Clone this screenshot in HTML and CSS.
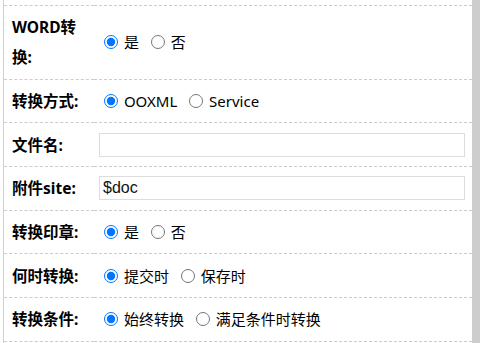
FILE: index.html
```html
<!DOCTYPE html>
<html lang="en">
<head>
    <meta charset="UTF-8">
    <meta name="viewport" content="width=device-width, initial-scale=1.0">
    <title>WORD转换设置</title>
    <link rel="stylesheet" href="styles.css">
</head>
<body>
    <div class="page">
        <div class="panel">
            <table class="form-table">
                <tr>
                    <td class="label">WORD转换:</td>
                    <td class="value">
                        <label><input type="radio" name="word" checked> 是</label>
                        <label><input type="radio" name="word"> 否</label>
                    </td>
                </tr>
                <tr>
                    <td class="label">转换方式:</td>
                    <td class="value">
                        <label><input type="radio" name="mode" checked> OOXML</label>
                        <label><input type="radio" name="mode"> Service</label>
                    </td>
                </tr>
                <tr>
                    <td class="label">文件名:</td>
                    <td class="value"><input type="text" class="text-input"></td>
                </tr>
                <tr>
                    <td class="label">附件site:</td>
                    <td class="value"><input type="text" class="text-input" value="$doc"></td>
                </tr>
                <tr>
                    <td class="label">转换印章:</td>
                    <td class="value">
                        <label><input type="radio" name="seal" checked> 是</label>
                        <label><input type="radio" name="seal"> 否</label>
                    </td>
                </tr>
                <tr>
                    <td class="label">何时转换:</td>
                    <td class="value">
                        <label><input type="radio" name="when" checked> 提交时</label>
                        <label><input type="radio" name="when"> 保存时</label>
                    </td>
                </tr>
                <tr>
                    <td class="label">转换条件:</td>
                    <td class="value">
                        <label><input type="radio" name="cond" checked> 始终转换</label>
                        <label><input type="radio" name="cond"> 满足条件时转换</label>
                    </td>
                </tr>
            </table>
        </div>
        <div class="scrollbar"></div>
    </div>
</body>
</html>
```

FILE: styles.css
```css
body {
    margin: 0;
    background-color: #fff;
    font-family: "Noto Sans", "Noto Sans CJK SC", sans-serif;
    font-size: 15px;
    color: #000;
}

.page {
    display: flex;
    height: 343px;
    overflow: hidden;
}

.panel {
    flex: 1;
    margin-left: 3px;
    padding-top: 5px;
    border-left: 1px solid #d0d0d0;
}

.scrollbar {
    width: 8px;
    background-color: #cdcdcd;
}

.form-table {
    width: 100%;
    border-collapse: collapse;
}

.form-table tr {
    border-top: 1px dashed #ccc;
    border-bottom: 1px dashed #ccc;
}

.form-table td {
    padding-top: 6.33px;
    padding-bottom: 6.33px;
    line-height: 30px;
    vertical-align: middle;
}

.label {
    width: 74px;
    padding-left: 8px;
    padding-right: 8px;
    font-weight: bold;
    font-size: 15.5px;
}

.value {
    padding-left: 5px;
    padding-right: 7px;
}

.value label {
    margin-right: 3px;
}

.value input[type="radio"] {
    width: 14px;
    height: 14px;
    margin: 3px 2px 0 5px;
    vertical-align: -1px;
}

.text-input {
    display: block;
    width: 100%;
    height: 24px;
    box-sizing: border-box;
    margin: 0;
    padding: 0 3px;
    border: 1px solid #ddd;
    font-family: "Liberation Sans", Arial, sans-serif;
    font-size: 16px;
    color: #111;
    outline: none;
}
```
